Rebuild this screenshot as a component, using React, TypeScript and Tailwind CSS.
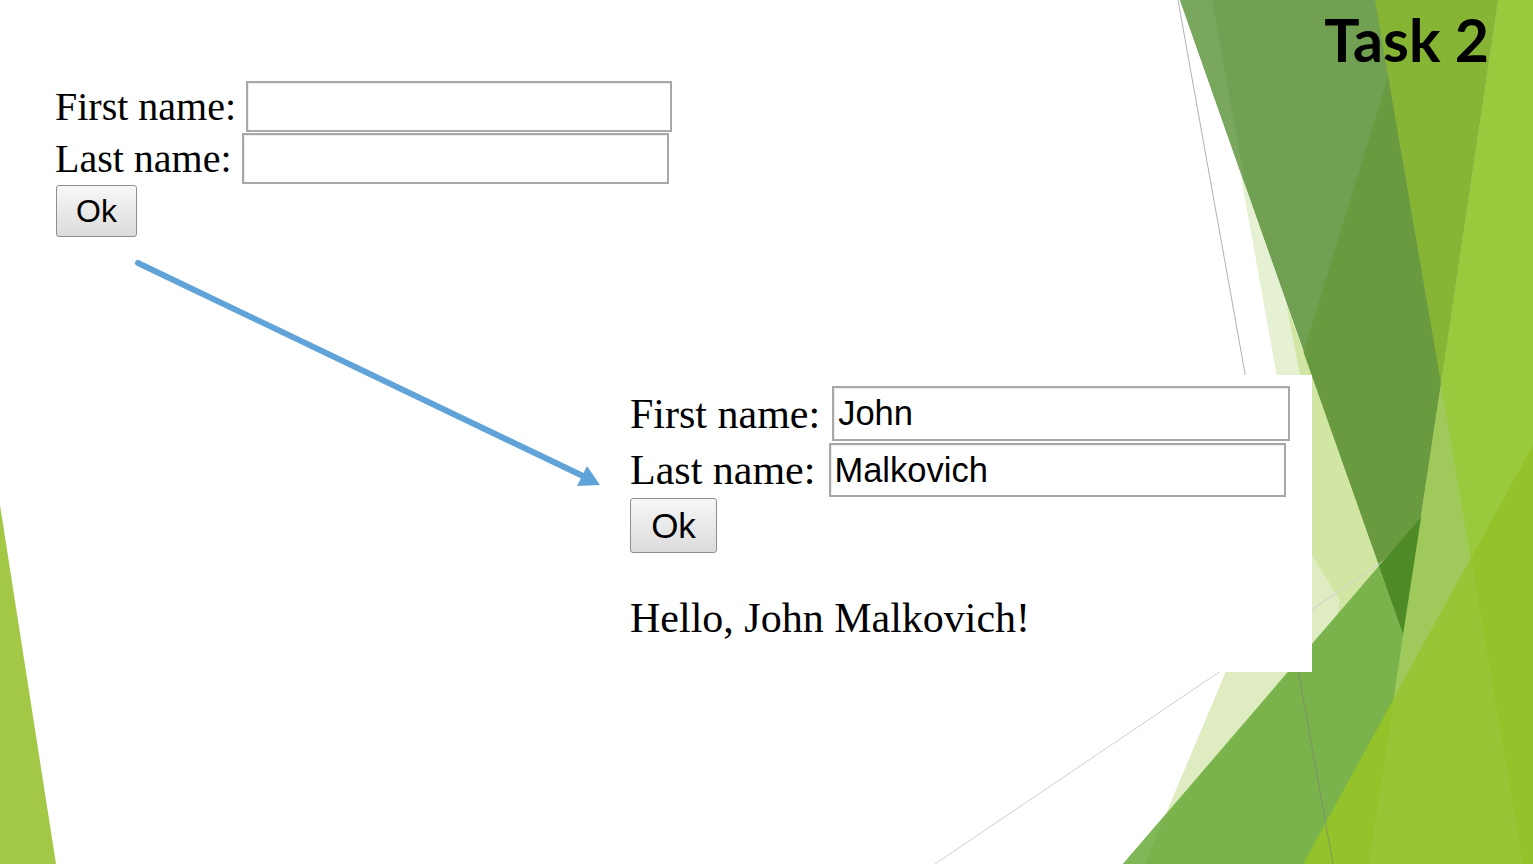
const facets = [
  { points: '1498,0 1533,0 1533,864 1369,864', fill: '#99c93d' },
  { points: '1180,0 1498,0 1403,634', fill: '#71a052' },
  { points: '1180,0 1212,0 1246,188', fill: '#78a75d' },
  { points: '1375,0 1498,0 1441,384', fill: '#86b535' },
  { points: '1388,77 1441,384 1403,634 1303,353', fill: '#6a9a40' },
  { points: '1441,384 1523,864 1369,864', fill: '#a0c95c' },
  { points: '1241,175 1403,634 1330,864 1145,864 1290,520 1277,375', fill: '#d2e6a4' },
  { points: '1241,175 1286,302 1300,375 1277,375', fill: '#e6f0d2' },
  { points: '1290,520 1340,600 1300,864 1145,864', fill: '#dfecc1' },
]

const frontFacets = [
  { points: '1123,864 1421,517 1369,864', fill: '#7ab34b' },
  { points: '1123,864 1145,864 1166,814', fill: '#80b858' },
  { points: '1379,566 1421,517 1403,634', fill: '#4e8a26' },
  { points: '1303,864 1533,445 1533,864', fill: '#93c22b' },
  { points: '1394,699 1471,558 1523,864 1369,864', fill: '#98c535' },
]

function Backdrop() {
  return (
    <svg className="absolute inset-0" width="1533" height="864" viewBox="0 0 1533 864">
      {facets.map((f) => (
        <polygon key={f.points} points={f.points} fill={f.fill} />
      ))}
      <line x1="935" y1="864" x2="1385" y2="560" stroke="#cfcfcf" strokeWidth="1" />
      {frontFacets.map((f) => (
        <polygon key={f.points} points={f.points} fill={f.fill} />
      ))}
      <line x1="1178" y1="0" x2="1333" y2="864" stroke="#7d7d7d" strokeOpacity="0.6" strokeWidth="1" />
      <polygon points="0,505 56,864 0,864" fill="#a2c846" />
      {/* arrow */}
      <line x1="138" y1="263" x2="583" y2="476" stroke="#5fa3d8" strokeWidth="6" strokeLinecap="round" />
      <polygon points="600,485 577,486 587,466" fill="#5fa3d8" />
    </svg>
  )
}

const inputCls =
  "border-2 border-[#a8a8a8] bg-white shadow-[inset_1px_1px_1px_rgba(0,0,0,0.08)] font-['Liberation_Sans',Arial,sans-serif] text-black outline-none"
const buttonCls =
  "border border-[#8f8f8f] rounded-[3px] bg-linear-to-b from-[#f7f7f7] to-[#dcdcdc] font-['Liberation_Sans',Arial,sans-serif] text-black"

export default function App() {
  return (
    <div className="relative w-[1533px] h-[864px] overflow-hidden bg-white font-['Liberation_Serif','Times_New_Roman',serif] text-black">
      <Backdrop />

      <div className="relative">
        <div className="flex justify-between items-start">
          {/* empty form */}
          <div className="flex flex-col pl-[55px] pt-[81px]">
            <div className="flex items-center gap-[10px] h-[51px]">
              <span className="text-[40px] leading-[46px]">First name:</span>
              <input readOnly className={`${inputCls} w-[426px] h-[51px]`} />
            </div>
            <div className="flex items-center gap-[10px] h-[51px] mt-[1px]">
              <span className="text-[40px] leading-[46px]">Last name:</span>
              <input readOnly className={`${inputCls} w-[427px] h-[51px]`} />
            </div>
            <button className={`${buttonCls} mt-[1px] ml-[1px] w-[81px] h-[52px] text-[32px] leading-none`}>Ok</button>
          </div>

          <h1 className="pt-[3px] pr-[44px] font-['Lato',sans-serif] font-bold text-[59px] leading-[73px]">Task 2</h1>
        </div>

        {/* filled form */}
        <div className="ml-[612px] mt-[138px] w-[700px] h-[297px] bg-white pl-[18px] pt-[11px]">
          <div className="flex items-center gap-[12px] h-[55px]">
            <span className="text-[42px] leading-[48px]">First name:</span>
            <input readOnly value="John" className={`${inputCls} w-[458px] h-[55px] pl-[4px] text-[34.5px]`} />
          </div>
          <div className="flex items-center gap-[14px] h-[54px] mt-[2px]">
            <span className="text-[42px] leading-[48px]">Last name:</span>
            <input readOnly value="Malkovich" className={`${inputCls} w-[457px] h-[54px] pl-[3px] text-[34.5px]`} />
          </div>
          <button className={`${buttonCls} mt-[1px] w-[87px] h-[55px] text-[35px] leading-none`}>Ok</button>
          <p className="mt-[41px] text-[42px] leading-[48px]">Hello, John Malkovich!</p>
        </div>
      </div>
    </div>
  )
}
